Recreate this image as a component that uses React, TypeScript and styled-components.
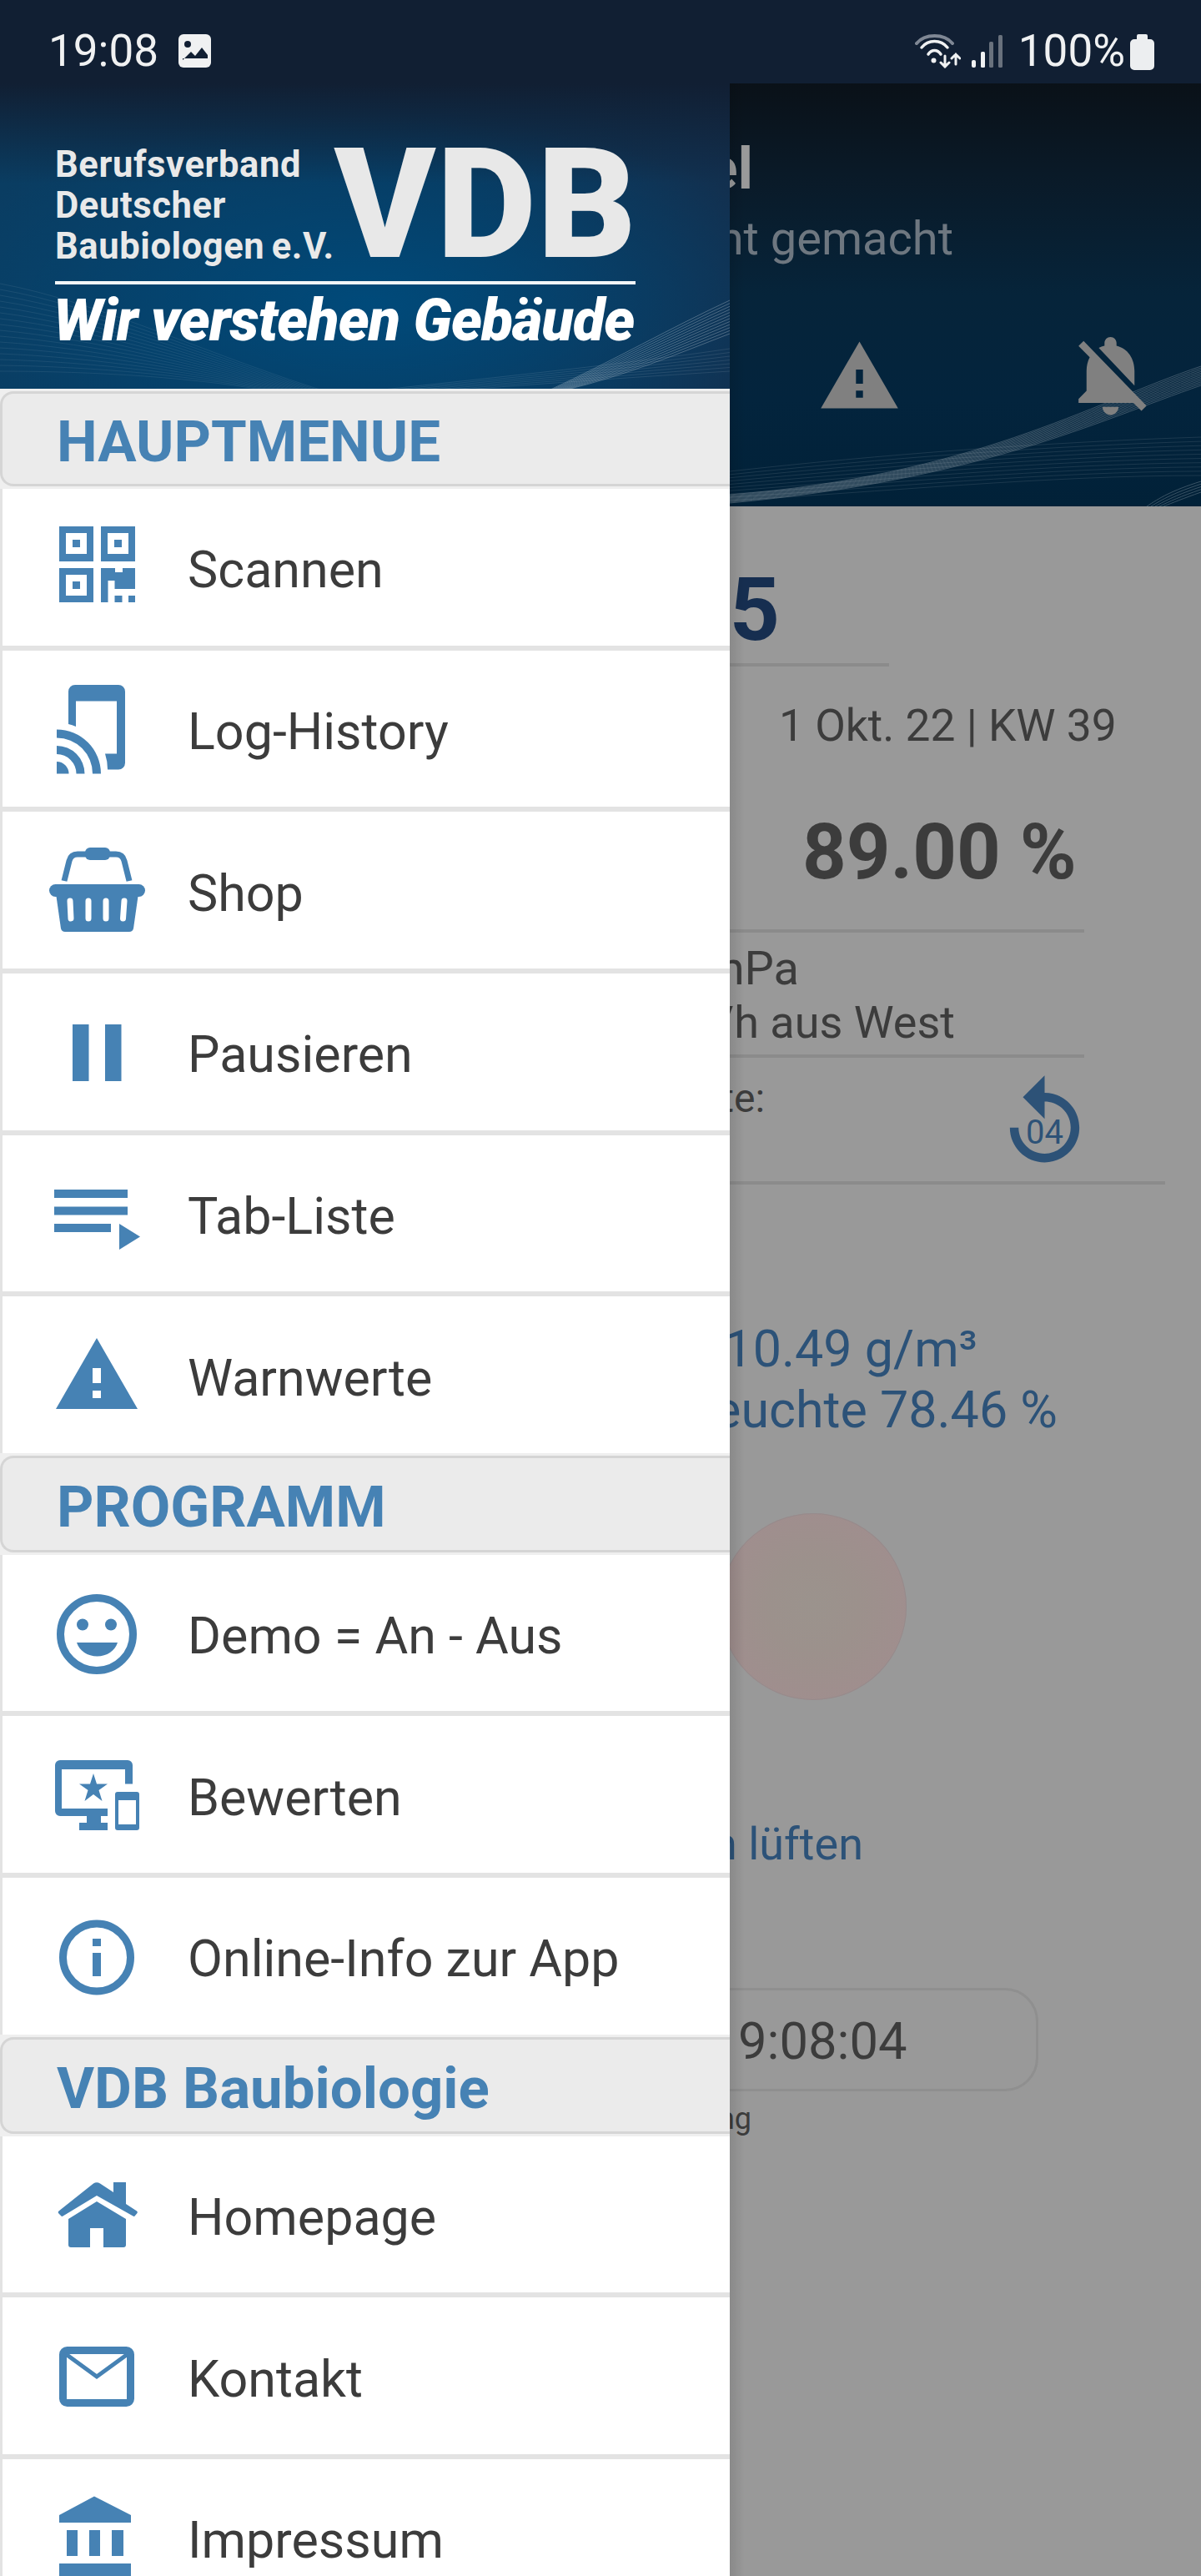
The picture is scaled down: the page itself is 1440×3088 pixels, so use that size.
import * as React from "react";
import styled, { createGlobalStyle } from "styled-components";
import { MdNotificationsOff, MdWarning } from "react-icons/md";

const BLUE = "#4682b4";

const GlobalStyle = createGlobalStyle`
  html, body {
    margin: 0;
    padding: 0;
    background: #999999;
  }
  body {
    font-family: Roboto, "Liberation Sans", sans-serif;
  }
`;

const Page = styled.div`
  width: 1440px;
  height: 3088px;
  overflow: hidden;
  display: flex;
  flex-direction: column;
`;

const StatusBar = styled.div`
  height: 100px;
  flex: none;
  background: #111f33;
  color: #f0f1f2;
  display: flex;
  align-items: center;
  justify-content: space-between;
  padding: 22px 56px 0 58px;
  font-size: 53px;
  box-sizing: border-box;
`;

const StatusGroup = styled.div<{ $gap: number }>`
  display: flex;
  align-items: center;
  gap: ${(p) => p.$gap}px;
`;

const Battery = styled.span`
  margin-left: 13px;
`;

const BatterySvg = styled.svg`
  margin-top: 3px;
`;

const Body = styled.div`
  flex: 1;
  display: flex;
  min-height: 0;
`;

const Drawer = styled.aside`
  width: 875px;
  flex: none;
  background: #ffffff;
  overflow: hidden;
`;

const DrawerHeader = styled.div`
  position: relative;
  height: 366px;
  box-sizing: border-box;
  padding: 78px 0 0 66px;
  overflow: hidden;
  background:
    radial-gradient(ellipse 540px 230px at 440px 265px, #004a7a 0%, rgba(0, 74, 122, 0) 100%),
    linear-gradient(90deg, #0a3d62 0%, #0a385c 60%, #12304f 100%);
`;

const HeaderFade = styled.div`
  position: absolute;
  left: 0;
  right: 0;
  top: 0;
  height: 120px;
  background: linear-gradient(#111f33, rgba(17, 31, 51, 0));
`;

const WaveSvg = styled.svg`
  position: absolute;
  left: 0;
  top: 0;
  width: 100%;
  height: 100%;
`;

const Logo = styled.div`
  position: relative;
  width: 696px;
`;

const LogoTop = styled.div`
  display: flex;
  align-items: flex-start;
  justify-content: space-between;
  height: 150px;
`;

const LogoLines = styled.div`
  font-size: 43.5px;
  font-weight: 700;
  line-height: 49px;
  letter-spacing: 0.6px;
  word-spacing: -3px;
  color: #e9e9e9;
  margin-top: -5px;
  white-space: nowrap;
`;

const LogoMark = styled.div`
  font-size: 184px;
  font-weight: 900;
  line-height: 131px;
  letter-spacing: 1.5px;
  color: #e8e8e8;
  margin: 2px -2px 0 0;
`;

const LogoRule = styled.div`
  height: 4px;
  margin-top: 9px;
  background: #f3f6f8;
`;

const LogoTagline = styled.div`
  font-size: 70px;
  font-weight: 900;
  font-style: italic;
  line-height: 64px;
  margin: 11px 0 0 -2px;
  color: #ffffff;
  white-space: nowrap;
  letter-spacing: -0.9px;
`;

const Section = styled.div`
  background: #efefef;
  padding: 3px 0;
`;

const SectionBox = styled.div<{ $first?: boolean }>`
  height: ${(p) => (p.$first ? 114 : 116)}px;
  box-sizing: border-box;
  background: #ebebeb;
  border: 3px solid #d5d5d5;
  border-right: none;
  border-radius: 16px 0 0 16px;
  padding: ${(p) => (p.$first ? 6 : 8)}px 0 0 65px;
  display: flex;
  align-items: center;
  color: ${BLUE};
  font-size: 69px;
  font-weight: 700;
  white-space: nowrap;
`;

const RowList = styled.div`
  & > div:first-child {
    height: 187.65px;
  }
`;

const Row = styled.div`
  height: 193.65px;
  box-sizing: border-box;
  border-left: 3px solid #e3e3e3;
  display: flex;
  align-items: center;
  background: #ffffff;
  color: #3c3c3c;
  font-size: 61px;

  & + & {
    border-top: 6px solid #e3e3e3;
  }
`;

const RowLabel = styled.span`
  margin-top: 7px;
  white-space: nowrap;
`;

const IconSlot = styled.div`
  width: 222px;
  flex: none;
  display: flex;
  padding-left: 55px;
  box-sizing: border-box;
`;

const Icon = styled.svg`
  width: 116px;
  height: 116px;
  display: block;
  fill: ${BLUE};
  overflow: visible;
`;

const Panel = styled.main`
  position: relative;
  flex: 1;
  min-width: 0;
  overflow: hidden;
  background: #999999;
  color: #3c3c3c;

  &::after {
    content: "";
    position: absolute;
    left: 0;
    top: 0;
    bottom: 0;
    width: 18px;
    background: linear-gradient(90deg, rgba(0, 0, 0, 0.1), rgba(0, 0, 0, 0));
  }
`;

const PanelHeader = styled.header`
  position: relative;
  height: 507px;
  overflow: hidden;
  background: linear-gradient(#0a1118 0%, #0a1a28 22%, #06243a 50%, #03243d 75%, #012138 100%);
`;

const Line = styled.div<{ $end: number; $top: number; $size: number; $bold?: boolean; $color?: string }>`
  position: relative;
  width: ${(p) => p.$end}px;
  margin-top: ${(p) => p.$top}px;
  display: flex;
  justify-content: flex-end;
  white-space: nowrap;
  font-size: ${(p) => p.$size}px;
  font-weight: ${(p) => (p.$bold ? 700 : 400)};
  color: ${(p) => p.$color ?? "inherit"};
`;

const HeaderIcons = styled.div`
  position: relative;
  display: flex;
  align-items: flex-start;
  margin: 73px 0 0 105px;
  gap: 193px;
  color: #808080;
`;

const WarningGlyph = styled(MdWarning)`
  margin-top: 9px;
`;

const Rule = styled.div<{ $width: number; $top: number }>`
  width: ${(p) => p.$width}px;
  height: 4px;
  margin-top: ${(p) => p.$top}px;
  background: #8b8b8b;
`;

const DateLine = styled.div`
  margin: 40px 0 0 59px;
  font-size: 53.3px;
  white-space: nowrap;
`;

const Percent = styled.div`
  margin: 67px 0 0 87px;
  font-size: 92px;
  font-weight: 700;
  white-space: nowrap;
`;

const RefreshRow = styled.div`
  width: 425px;
  height: 148px;
  display: flex;
  justify-content: space-between;
`;

const RefreshIcon = styled.div`
  position: relative;
  width: 125px;
  height: 125px;
  margin: 16px -15px 0 0;
  color: #2d5277;

  svg {
    display: block;
    width: 125px;
    height: 125px;
    fill: currentColor;
  }
`;

const RefreshCount = styled.span`
  position: absolute;
  left: 0;
  right: 0;
  top: 50px;
  text-align: center;
  font-size: 40px;
`;

const Ampel = styled.div`
  width: 224px;
  height: 224px;
  margin: 88px 0 0 -12px;
  border-radius: 50%;
  background: radial-gradient(circle, #9b938d 0%, #9c918c 35%, #a08e8e 75%, #a08d8e 100%);
  box-shadow: inset 0 0 0 1px #968b8c;
`;

const TimeBox = styled.div`
  width: 410px;
  height: 124px;
  margin: 141px 0 0 -40px;
  box-sizing: border-box;
  border: 3px solid #8f8f8f;
  border-radius: 40px;
  display: flex;
  align-items: center;
  padding: 4px 0 0 47px;
  font-size: 61.5px;
`;

type Curve = number[];

function fan(from: Curve, to: Curve, count: number): string[] {
  const out: string[] = [];
  for (let i = 0; i < count; i++) {
    const t = count === 1 ? 0 : i / (count - 1);
    const c = from.map((v, k) => v + (to[k] - v) * t);
    out.push(`M${c[0]} ${c[1]}C${c[2]} ${c[3]} ${c[4]} ${c[5]} ${c[6]} ${c[7]}`);
  }
  return out;
}

function Waves({ paths, opacity }: { paths: string[]; opacity: number }) {
  return (
    <g fill="none" stroke="#ffffff" strokeWidth={0.8} opacity={opacity}>
      {paths.map((d, i) => (
        <path key={i} d={d} />
      ))}
    </g>
  );
}

function DrawerWaves() {
  return (
    <WaveSvg viewBox="0 0 875 366" preserveAspectRatio="none">
      <Waves opacity={0.32} paths={fan([875, 260, 810, 290, 730, 335, 660, 367], [875, 300, 810, 325, 750, 350, 680, 367], 12)} />
      <Waves opacity={0.09} paths={fan([0, 240, 120, 262, 260, 330, 400, 372], [0, 345, 110, 345, 240, 352, 340, 372], 16)} />
      <Waves opacity={0.12} paths={fan([875, 318, 760, 335, 600, 352, 450, 368], [875, 345, 760, 352, 620, 362, 520, 370], 7)} />
    </WaveSvg>
  );
}

function PanelWaves() {
  return (
    <WaveSvg viewBox="0 0 565 507" preserveAspectRatio="none">
      <Waves opacity={0.28} paths={fan([565, 339, 430, 385, 290, 470, 0, 493], [565, 362, 440, 405, 300, 475, 0, 503], 12)} />
      <Waves opacity={0.12} paths={fan([0, 465, 180, 445, 380, 430, 565, 424], [0, 500, 180, 490, 380, 470, 565, 470], 10)} />
      <Waves opacity={0.28} paths={fan([565, 477, 530, 488, 515, 497, 500, 507], [565, 490, 545, 497, 530, 503, 520, 507], 5)} />
    </WaveSvg>
  );
}

const ScanIcon = () => (
  <Icon viewBox="0 0 116 116">
    <path
      fillRule="evenodd"
      d="M13 9h41v42H13zM21 17v25h25V17zM29 25h9v9h-9zM63 9h41v42H63zM71 17v25h25V17zM79 25h9v9h-9zM13 59h41v41H13zM21 67v25h25V67zM29 75h9v9h-9z"
    />
    <path d="M63 59h17v5h9v-5h15v25H71.500v16H63zM79.500 92h9v8h-9zM96 92h8v8h-8z" />
    <path fill="#fff" d="M71.500 74h8v10h-8z" />
  </Icon>
);

const LogIcon = () => (
  <Icon viewBox="0 0 116 116">
    <path d="M24 53V14a8 8 0 0 1 8-8h52a8 8 0 0 1 8 8v85.500a8 8 0 0 1-8 8H71a61 61 0 0 0-3-19h14v-63H33V56a61 61 0 0 0-9-3z" />
    <path d="M10 59.500a53 53 0 0 1 53 53H53a43 43 0 0 0-43-43zM10 79a33.500 33.500 0 0 1 33.500 33.500h-10A23.500 23.500 0 0 0 10 89zM10 98a14.500 14.500 0 0 1 14.500 14.500H10z" />
  </Icon>
);

const ShopIcon = () => (
  <Icon viewBox="0 0 116 116">
    <path fill="none" stroke={BLUE} strokeWidth={7} d="M19 47l6-24q2-8 10-8h46q8 0 10 8l6 24" />
    <rect x={44} y={7} width={30} height={15} rx={6} />
    <rect x={1} y={51} width={115} height={15} rx={7.500} />
    <path d="M9 62h99l-6 42q-1 4-5 4H20q-4 0-5-4z" />
    <g stroke="#fff" strokeWidth={7} strokeLinecap="round" fill="none">
      <path d="M26 71l1 21M48 71v21M69 71v21M91 71l-1.500 21" />
    </g>
  </Icon>
);

const PauseIcon = () => (
  <Icon viewBox="0 0 116 116">
    <path d="M29 25h19.500v68H29zM68 25h19.500v68H68z" />
  </Icon>
);

const ListIcon = () => (
  <Icon viewBox="0 0 116 116">
    <path d="M7 30h88v10H7zM7 50.500h88v10H7zM7 71h68v10H7zM85 71l25 15.500-25 15.500z" />
  </Icon>
);

const WarnIcon = () => (
  <Icon viewBox="0 0 116 116">
    <path fillRule="evenodd" d="M58 14l49 85H9zM53 50v18h10V50zM53 77v9h10v-9z" />
  </Icon>
);

const DemoIcon = () => (
  <Icon viewBox="0 0 116 116">
    <circle cx={58} cy={59} r={43.500} fill="none" stroke={BLUE} strokeWidth={9} />
    <circle cx={41} cy={47.500} r={7} />
    <circle cx={75} cy={47.500} r={7} />
    <path d="M34 69h49c-3 10-13 16.500-24.500 16.500S37 79 34 69z" />
  </Icon>
);

const RateIcon = () => (
  <Icon viewBox="0 0 116 116">
    <path d="M14 17h81a6 6 0 0 1 6 6v22.500h-9V28H16v47h55v9H14a6 6 0 0 1-6-6V23a6 6 0 0 1 6-6z" />
    <path d="M46 84h17v8h8v9H37v-9h9z" />
    <path d="M54 33l4 12.500h13l-10.500 7.500 4 13-10.500-8-10.500 8 4-13-10.500-7.500h13z" />
    <path fillRule="evenodd" d="M83 55h23a3 3 0 0 1 3 3v40a3 3 0 0 1-3 3H83a3 3 0 0 1-3-3V58a3 3 0 0 1 3-3zM84 65v29h21V65z" />
  </Icon>
);

const InfoIcon = () => (
  <Icon viewBox="0 0 116 116">
    <circle cx={58} cy={59.500} r={40.500} fill="none" stroke={BLUE} strokeWidth={9} />
    <path d="M53 37h10v9H53zM53 54h10v28H53z" />
  </Icon>
);

const HomeIcon = () => (
  <Icon viewBox="0 0 116 116">
    <path d="M54 20.500q4-2.500 8 0L78 31V19h15v26l13 8.500q1.500 1 .5 2.500l-2.500 3q-1 1.500-2.500.5L58 35 17.500 59.500q-1.500 1-2.500-.5l-3-3q-1-1.500.5-2.500z" />
    <path d="M58 42l35 21v31q0 3-3 3H66V74H50v23H27q-3 0-3-3V63z" />
  </Icon>
);

const MailIcon = () => (
  <Icon viewBox="0 0 116 116">
    <rect x={17.500} y={27.500} width={81} height={63} rx={5} fill="none" stroke={BLUE} strokeWidth={9} />
    <path fill="none" stroke={BLUE} strokeWidth={5} d="M21 32l37 27 37-27" />
  </Icon>
);

const BankIcon = () => (
  <Icon viewBox="0 0 116 116">
    <path d="M55 8.500l44 22.500v9H13v-9zM22 49h13v31H22zM49 49h13v31H49zM76 49h14v31H76zM13 89h86v20H13z" />
  </Icon>
);

interface MenuEntry {
  label: string;
  icon: React.ReactNode;
}

const mainMenu: MenuEntry[] = [
  { label: "Scannen", icon: <ScanIcon /> },
  { label: "Log-History", icon: <LogIcon /> },
  { label: "Shop", icon: <ShopIcon /> },
  { label: "Pausieren", icon: <PauseIcon /> },
  { label: "Tab-Liste", icon: <ListIcon /> },
  { label: "Warnwerte", icon: <WarnIcon /> },
];

const programMenu: MenuEntry[] = [
  { label: "Demo = An - Aus", icon: <DemoIcon /> },
  { label: "Bewerten", icon: <RateIcon /> },
  { label: "Online-Info zur App", icon: <InfoIcon /> },
];

const vdbMenu: MenuEntry[] = [
  { label: "Homepage", icon: <HomeIcon /> },
  { label: "Kontakt", icon: <MailIcon /> },
  { label: "Impressum", icon: <BankIcon /> },
];

function MenuGroup({ title, items, first }: { title: string; items: MenuEntry[]; first?: boolean }) {
  return (
    <>
      <Section>
        <SectionBox $first={first}>{title}</SectionBox>
      </Section>
      <RowList>
        {items.map((item) => (
          <Row key={item.label}>
            <IconSlot>{item.icon}</IconSlot>
            <RowLabel>{item.label}</RowLabel>
          </Row>
        ))}
      </RowList>
    </>
  );
}

const StatusImageIcon = () => (
  <svg width={40} height={40} viewBox="0 0 40 40">
    <rect width={39} height={40} rx={6} fill="#f0f1f2" />
    <circle cx={11} cy={12} r={4} fill="#111f33" />
    <path d="M5 31l10-10 5 5 8-10 7 9v4H5z" fill="#111f33" />
  </svg>
);

const WifiIcon = () => (
  <svg width={55} height={42} viewBox="0 0 55 42" fill="none" strokeLinecap="round">
    <path d="M2 12C12 0 35 0 45 12" stroke="#7f8794" strokeWidth={4} />
    <path d="M8 17C16 7 31 7 39 17" stroke="#f0f1f2" strokeWidth={3.500} />
    <path d="M16 25C20 19 27 19 31 25" stroke="#f0f1f2" strokeWidth={3.500} />
    <circle cx={22.500} cy={32.500} r={3} fill="#f0f1f2" />
    <path d="M36 27v13M31 35l5 5 5-5M49 37V25M44 30l5-5 5 5" stroke="#f0f1f2" strokeWidth={3} />
  </svg>
);

const SignalIcon = () => (
  <svg width={37} height={40} viewBox="0 0 37 40">
    <rect x={0} y={31} width={5} height={9} rx={2} fill="#f0f1f2" />
    <rect x={11} y={21} width={5} height={19} rx={1.500} fill="#f0f1f2" />
    <rect x={21} y={9} width={5} height={31} rx={1.500} fill="#69717d" />
    <rect x={32} y={1} width={5} height={39} rx={1.500} fill="#69717d" />
  </svg>
);

const BatteryIcon = () => (
  <BatterySvg width={29} height={43} viewBox="0 0 29 43">
    <path d="M10 0h9a2 2 0 0 1 2 2v4h3a5 5 0 0 1 5 5v27a5 5 0 0 1-5 5H5a5 5 0 0 1-5-5V11a5 5 0 0 1 5-5h3V2a2 2 0 0 1 2-2z" fill="#eceef0" />
  </BatterySvg>
);

export default function App() {
  return (
    <Page>
      <GlobalStyle />
      <StatusBar>
        <StatusGroup $gap={24}>
          19:08
          <StatusImageIcon />
        </StatusGroup>
        <StatusGroup $gap={6}>
          <StatusGroup $gap={13}>
            <WifiIcon />
            <SignalIcon />
          </StatusGroup>
          <Battery>100%</Battery>
          <BatteryIcon />
        </StatusGroup>
      </StatusBar>

      <Body>
        <Drawer>
          <DrawerHeader>
            <DrawerWaves />
            <HeaderFade />
            <Logo>
              <LogoTop>
                <LogoLines>
                  Berufsverband
                  <br />
                  Deutscher
                  <br />
                  Baubiologen e.V.
                </LogoLines>
                <LogoMark>VDB</LogoMark>
              </LogoTop>
              <LogoRule />
              <LogoTagline>Wir verstehen Gebäude</LogoTagline>
            </Logo>
          </DrawerHeader>
          <MenuGroup title="HAUPTMENUE" items={mainMenu} first />
          <MenuGroup title="PROGRAMM" items={programMenu} />
          <MenuGroup title="VDB Baubiologie" items={vdbMenu} />
        </Drawer>

        <Panel>
          <PanelHeader>
            <PanelWaves />
            <Line $end={28} $top={61} $size={70} $bold $color="#9a9a9a">
              el
            </Line>
            <Line $end={268} $top={10} $size={56} $color="#6e7780">
              nt gemacht
            </Line>
            <HeaderIcons>
              <WarningGlyph size={101} />
              <MdNotificationsOff size={115} />
            </HeaderIcons>
          </PanelHeader>

          <Line $end={60} $top={63} $size={105} $bold $color="#162e50">
            5
          </Line>
          <Rule $width={191} $top={2} />
          <DateLine>1 Okt. 22 | KW 39</DateLine>
          <Percent>89.00 %</Percent>
          <Rule $width={425} $top={39} />
          <Line $end={83} $top={10} $size={56}>
            hPa
          </Line>
          <Line $end={270} $top={0} $size={54}>
            /h aus West
          </Line>
          <Rule $width={425} $top={7} />
          <RefreshRow>
            <Line $end={42} $top={20} $size={48}>
              te:
            </Line>
            <RefreshIcon>
              <svg viewBox="0 0 24 24">
                <path d="M12 5V1L7 6l5 5V7c3.310 0 6 2.690 6 6s-2.690 6-6 6-6-2.690-6-6H4c0 4.420 3.580 8 8 8s8-3.580 8-8-3.580-8-8-8z" />
              </svg>
              <RefreshCount>04</RefreshCount>
            </RefreshIcon>
          </RefreshRow>
          <Rule $width={522} $top={0} />
          <Line $end={297} $top={161} $size={61} $color="#2c5278">
            10.49 g/m³
          </Line>
          <Line $end={393} $top={1} $size={61} $color="#2c5278">
            euchte 78.46 %
          </Line>
          <Ampel />
          <Line $end={160} $top={141} $size={54} $color="#2c5278">
            n lüften
          </Line>
          <TimeBox>9:08:04</TimeBox>
          <Line $end={26} $top={12} $size={36}>
            ng
          </Line>
        </Panel>
      </Body>
    </Page>
  );
}
